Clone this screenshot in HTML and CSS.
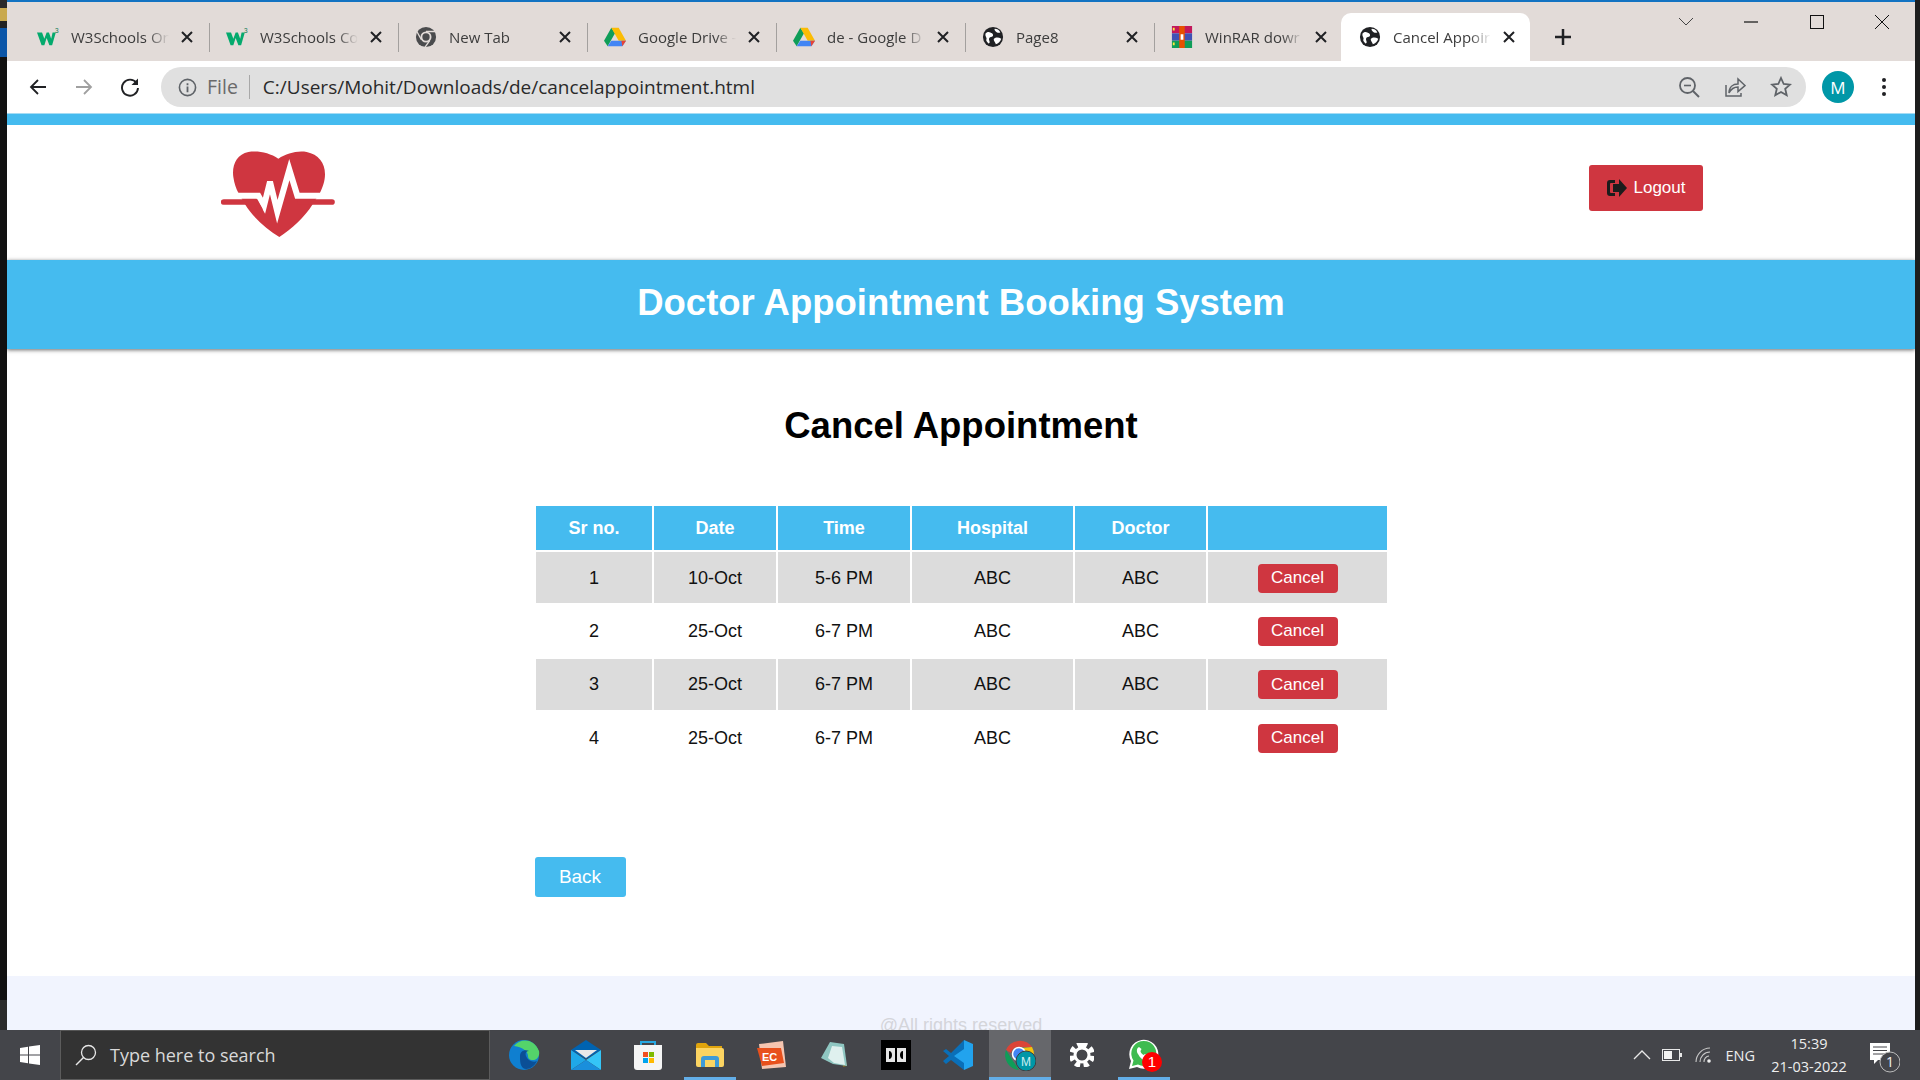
FILE: index.html
```html
<!DOCTYPE html>
<html lang="en">
<head>
    <meta charset="UTF-8">
    <title>Cancel Appointment</title>
    <link rel="stylesheet" href="styles.css">
</head>
<body>

<svg class="defs" width="0" height="0">
    <symbol id="w3" viewBox="0 0 24 20">
        <path fill="#04aa6d" d="M0 5h5.500l2.500 7 2.500-7h2.500l2.500 7 1.500-7h3.500l-4 14h-3L10.500 11 8 19H5z"/>
        <text x="19.500" y="5.500" font-size="7" fill="#0a7a50" font-family="Liberation Sans">3</text>
    </symbol>
    <symbol id="globe" viewBox="0 0 24 24">
        <circle cx="12" cy="12" r="11" fill="#202124"/>
        <path fill="#fff" d="M4 8c3-3 5-1 7 0 2 2 1 4-1 4s-3 2-2 4 0 3-1 3c-2-2-3-3-2-5 0-2-2-3-1-6zM13 14c2-2 5-2 8 0-1 3-3 5-6 6 0-2-3-4-2-6zM14 3c2 0 5 1 6 4-2 1-4 0-5-1s-2-2-1-3z"/>
    </symbol>
    <symbol id="drive" viewBox="0 0 24 22">
        <path fill="#0f9d58" d="M8 1 0 15l4 6 8-14z"/>
        <path fill="#fbbc04" d="M8 1h8l8 14h-8z"/>
        <path fill="#4285f4" d="M4 21h16l4-6H8z"/>
        <path fill="#ea4335" d="M20 21l4-6h-5z"/>
    </symbol>
    <symbol id="x" viewBox="0 0 14 14">
        <path d="M2 2l10 10M12 2 2 12" stroke="#202124" stroke-width="2"/>
    </symbol>
</svg>

<div class="desktop">
    <div class="window">
        <div class="edge edge-left"></div>

        <div class="browser">
            <div class="tabstrip">
                <div class="tab">
                    <svg class="favicon"><use href="#w3"/></svg>
                    <span class="tab-title">W3Schools On</span>
                    <svg class="tab-close"><use href="#x"/></svg>
                </div>
                <div class="tab">
                    <svg class="favicon"><use href="#w3"/></svg>
                    <span class="tab-title">W3Schools Co</span>
                    <svg class="tab-close"><use href="#x"/></svg>
                </div>
                <div class="tab">
                    <svg class="favicon" viewBox="0 0 24 24">
                        <circle cx="12" cy="12" r="11" fill="#4a4b4d"/>
                        <circle cx="12" cy="12" r="6" fill="#e2dbd8"/>
                        <circle cx="12" cy="12" r="4" fill="#4a4b4d"/>
                        <path d="M12 6h10M7 15 2 6M16 16l-5 7" stroke="#e2dbd8" stroke-width="1.5"/>
                    </svg>
                    <span class="tab-title">New Tab</span>
                    <svg class="tab-close"><use href="#x"/></svg>
                </div>
                <div class="tab">
                    <svg class="favicon"><use href="#drive"/></svg>
                    <span class="tab-title">Google Drive -</span>
                    <svg class="tab-close"><use href="#x"/></svg>
                </div>
                <div class="tab">
                    <svg class="favicon"><use href="#drive"/></svg>
                    <span class="tab-title">de - Google D</span>
                    <svg class="tab-close"><use href="#x"/></svg>
                </div>
                <div class="tab">
                    <svg class="favicon"><use href="#globe"/></svg>
                    <span class="tab-title">Page8</span>
                    <svg class="tab-close"><use href="#x"/></svg>
                </div>
                <div class="tab tab-last">
                    <svg class="favicon" viewBox="0 0 24 24">
                        <rect x="1" y="0" width="22" height="8" fill="#c2185b"/>
                        <rect x="1" y="8" width="22" height="8" fill="#3f51b5"/>
                        <rect x="1" y="16" width="22" height="8" fill="#0f9d58"/>
                        <rect x="9" y="0" width="6" height="24" fill="#e65100"/>
                        <rect x="10.500" y="9" width="3" height="6" fill="#fff"/>
                        <path d="M3 2v3M3 18v3" stroke="#ffeb3b" stroke-width="2"/>
                    </svg>
                    <span class="tab-title">WinRAR dowr</span>
                    <svg class="tab-close"><use href="#x"/></svg>
                </div>
                <div class="tab tab-active">
                    <svg class="favicon"><use href="#globe"/></svg>
                    <span class="tab-title">Cancel Appoir</span>
                    <svg class="tab-close"><use href="#x"/></svg>
                </div>
                <svg class="new-tab" viewBox="0 0 20 20"><path d="M10 2v16M2 10h16" stroke="#202124" stroke-width="2.500"/></svg>
                <div class="window-controls">
                    <div class="control"><svg width="16" height="16" viewBox="0 0 16 16"><path d="M1 4l7 7 7-7" fill="none" stroke="#444" stroke-width="1"/></svg></div>
                    <div class="control"><svg width="16" height="16" viewBox="0 0 16 16"><path d="M1 8h14" stroke="#111" stroke-width="1.200"/></svg></div>
                    <div class="control"><svg width="16" height="16" viewBox="0 0 16 16"><rect x="1.500" y="1.500" width="13" height="13" fill="none" stroke="#111" stroke-width="1"/></svg></div>
                    <div class="control"><svg width="16" height="16" viewBox="0 0 16 16"><path d="M1 1l14 14M15 1 1 15" stroke="#111" stroke-width="1"/></svg></div>
                </div>
            </div>

            <div class="toolbar">
                <svg class="nav-icon" viewBox="0 0 20 20"><path d="M18 10H3M10 3l-7 7 7 7" fill="none" stroke="#202124" stroke-width="1.800"/></svg>
                <svg class="nav-icon" viewBox="0 0 20 20"><path d="M2 10h15M10 3l7 7-7 7" fill="none" stroke="#a0a0a0" stroke-width="1.800"/></svg>
                <svg class="nav-icon" viewBox="0 0 20 20"><path d="M16.500 6A8 8 0 1 0 18 11" fill="none" stroke="#202124" stroke-width="1.900"/><path d="M18 1.500V8h-6.500z" fill="#202124"/></svg>
                <div class="omnibox">
                    <svg class="info-icon" viewBox="0 0 20 20"><circle cx="10" cy="10" r="8.500" fill="none" stroke="#5f6368" stroke-width="1.700"/><path d="M10 9v6M10 5.500v2" stroke="#5f6368" stroke-width="1.900"/></svg>
                    <span class="scheme">File</span>
                    <span class="url">C:/Users/Mohit/Downloads/de/cancelappointment.html</span>
                    <div class="omni-actions">
                        <svg class="omni-icon" viewBox="0 0 22 22"><circle cx="9.500" cy="9.500" r="7.500" fill="none" stroke="#5f6368" stroke-width="1.800"/><path d="M15 15l6 6" stroke="#5f6368" stroke-width="2"/><path d="M6 9.500h7" stroke="#5f6368" stroke-width="1.600"/></svg>
                        <svg class="omni-icon" viewBox="0 0 22 22"><path d="M2 9v11h15v-3" fill="none" stroke="#5f6368" stroke-width="1.500"/><path d="M5 17c0-6 4-9 9-9V3l7 6.500-7 6V11c-4 0-7 2-9 6z" fill="none" stroke="#5f6368" stroke-width="1.500"/></svg>
                        <svg class="omni-icon" viewBox="0 0 22 22"><path d="M11 2l2.700 6 6.300.6-4.800 4.200 1.500 6.500L11 16l-5.700 3.300 1.500-6.500L2 8.600 8.300 8z" fill="none" stroke="#5f6368" stroke-width="1.800"/></svg>
                    </div>
                </div>
                <div class="avatar">M</div>
                <svg class="dots" viewBox="0 0 6 22"><circle cx="3" cy="4" r="2" fill="#202124"/><circle cx="3" cy="11" r="2" fill="#202124"/><circle cx="3" cy="18" r="2" fill="#202124"/></svg>
            </div>

            <div class="page">
                <div class="top-strip"></div>
                <header class="site-header">
                    <svg class="logo" viewBox="93 62 342 258">
                        <path fill="#cf3640" d="M265 85C240 68 205 60 175 65 140 72 125 105 130 140c3 20 8 35 15 47l20 35c25 40 65 75 103 98 38-25 75-58 100-98l22-35c8-15 15-35 15-55 0-35-20-60-55-67-30-5-60 5-85 20z"/>
                        <path fill="none" stroke="#fff" stroke-width="18" d="M120 196h85l17 30 18-72 22 90 36-126 24 78h95"/>
                        <path fill="none" stroke="#cf3640" stroke-width="17" stroke-linecap="round" d="M101 215h96l12 22M330 215h96"/>
                    </svg>
                    <button class="logout-btn">
                        <svg class="logout-icon" viewBox="0 0 20 20">
                            <path fill="#1c1c1c" d="M8 2H3a3 3 0 0 0-3 3v10a3 3 0 0 0 3 3h5v-3H4a1 1 0 0 1-1-1V6a1 1 0 0 1 1-1h4z"/>
                            <path fill="#1c1c1c" d="M12 1l8 9-8 9v-5H6V6h6z"/>
                        </svg>
                        Logout
                    </button>
                </header>

                <div class="banner">Doctor Appointment Booking System</div>

                <main class="content">
                    <h2 class="page-title">Cancel Appointment</h2>
                    <table class="appt-table">
                        <thead>
                            <tr>
                                <th class="col-sr">Sr no.</th>
                                <th class="col-date">Date</th>
                                <th class="col-time">Time</th>
                                <th class="col-hospital">Hospital</th>
                                <th class="col-doctor">Doctor</th>
                                <th class="col-action"></th>
                            </tr>
                        </thead>
                        <tbody>
                            <tr>
                                <td>1</td><td>10-Oct</td><td>5-6 PM</td><td>ABC</td><td>ABC</td>
                                <td><button class="cancel-btn">Cancel</button></td>
                            </tr>
                            <tr>
                                <td>2</td><td>25-Oct</td><td>6-7 PM</td><td>ABC</td><td>ABC</td>
                                <td><button class="cancel-btn">Cancel</button></td>
                            </tr>
                            <tr>
                                <td>3</td><td>25-Oct</td><td>6-7 PM</td><td>ABC</td><td>ABC</td>
                                <td><button class="cancel-btn">Cancel</button></td>
                            </tr>
                            <tr>
                                <td>4</td><td>25-Oct</td><td>6-7 PM</td><td>ABC</td><td>ABC</td>
                                <td><button class="cancel-btn">Cancel</button></td>
                            </tr>
                        </tbody>
                    </table>
                    <div class="back-row">
                        <button class="back-btn">Back</button>
                    </div>
                </main>

                <footer class="site-footer">@All rights reserved</footer>
            </div>
        </div>

        <div class="edge edge-right"></div>
    </div>

    <!-- Windows taskbar -->
    <div class="taskbar">
        <div class="start">
            <svg width="20" height="20" viewBox="0 0 20 20"><path fill="#fff" d="M0 3l8-1.200V9.500H0zM9 1.600 20 0v9.500H9zM0 10.500h8v7.700L0 17zM9 10.500h11V20L9 18.400z"/></svg>
        </div>
        <div class="search">
            <svg width="22" height="22" viewBox="0 0 22 22"><circle cx="13.500" cy="8.500" r="7" fill="none" stroke="#e8e8e8" stroke-width="1.300"/><path d="M8.500 13.500 1 21" stroke="#e8e8e8" stroke-width="1.400"/></svg>
            <span class="search-text">Type here to search</span>
        </div>
        <div class="apps">
            <div class="app">
                <svg width="32" height="32" viewBox="0 0 32 32">
                    <circle cx="16" cy="16" r="15" fill="#0f7fd0"/>
                    <path fill="#54d36a" d="M6 7c6-8 20-8 25 5 1 5-2 9-6 9-4 0-5-2-5-4 0-5-6-9-14-10z"/>
                    <path fill="#0b4f96" d="M12 17c0-5 5-7 9-5-5 0-4 6 0 9 3 2 6 2 8 1-4 8-11 9-14 7-3-3-3-8-3-12z"/>
                </svg>
            </div>
            <div class="app">
                <svg width="30" height="30" viewBox="0 0 30 30">
                    <path fill="#0063b1" d="M0 10 15 0l15 10-15 9z"/>
                    <path fill="#e8e8e8" d="M4 10h22l-11 8z"/>
                    <path fill="#1fa8e8" d="M0 10l15 10L0 30z"/>
                    <path fill="#35c5f7" d="M30 10 15 20l15 10z"/>
                    <path fill="#1a8fdc" d="M0 30l15-10 15 10z"/>
                </svg>
            </div>
            <div class="app">
                <svg width="30" height="30" viewBox="0 0 30 30">
                    <path d="M8 6V2h14v4" fill="none" stroke="#27a7e0" stroke-width="2"/>
                    <path fill="#f5f5f5" d="M1 5h28v22a3 3 0 0 1-3 3H4a3 3 0 0 1-3-3z"/>
                    <rect x="10" y="12" width="5" height="5" fill="#f25022"/>
                    <rect x="16" y="12" width="5" height="5" fill="#7fba00"/>
                    <rect x="10" y="18" width="5" height="5" fill="#00a4ef"/>
                    <rect x="16" y="18" width="5" height="5" fill="#ffb900"/>
                </svg>
            </div>
            <div class="app app-open">
                <svg width="28" height="24" viewBox="0 0 28 24">
                    <path fill="#e0a40c" d="M0 2a2 2 0 0 1 2-2h8l3 3h13v6H0z"/>
                    <path fill="#fcd462" d="M0 5h26a2 2 0 0 1 2 2v15a2 2 0 0 1-2 2H2a2 2 0 0 1-2-2z"/>
                    <path fill="#3f9bd8" d="M5 24v-8a3 3 0 0 1 3-3h12a3 3 0 0 1 3 3v8h-4v-7H9v7z"/>
                </svg>
            </div>
            <div class="app">
                <svg width="30" height="28" viewBox="0 0 30 28">
                    <path fill="#f6c5b0" d="M2 3 26 0l3 26-24 2z"/>
                    <path fill="#e8501c" d="M0 7h24l3 15-22 3z"/>
                    <text x="5" y="20" font-size="11" font-weight="700" fill="#fff" font-family="Liberation Sans">EC</text>
                </svg>
            </div>
            <div class="app">
                <svg width="28" height="28" viewBox="0 0 28 28">
                    <path fill="#8a6a20" d="M22 2l5 23-4 1z"/>
                    <path fill="#8fc7c2" d="M10 1 24 3l3 22-14-2L1 17z"/>
                    <path fill="#dff0ee" d="M12 5l10 1 3 18-11-2-6-5z"/>
                </svg>
            </div>
            <div class="app">
                <svg width="30" height="30" viewBox="0 0 30 30">
                    <rect width="30" height="30" fill="#000"/>
                    <path d="M5 8h9v14H5zM25 8h-9v14h9z" fill="#e6e6e6"/>
                    <path d="M8 11c4 0 4 8 0 8zM22 11c-4 0-4 8 0 8z" fill="#000"/>
                </svg>
            </div>
            <div class="app">
                <svg width="30" height="30" viewBox="0 0 30 30">
                    <path fill="#0a6fb8" d="M21 0 8 13 3 9 0 11l6 5-6 5 3 3 5-4 13 10z"/>
                    <path fill="#22a3ee" d="M21 0l9 4v22l-9 4V9L11 16l10 7z"/>
                </svg>
            </div>
            <div class="app app-active">
                <svg width="32" height="32" viewBox="0 0 32 32">
                    <path fill="#db4437" d="M2 11a15 15 0 0 1 26-3H15C10 8 8 11 7 14z"/>
                    <path fill="#f4c20d" d="M28 8a15 15 0 0 1 2 8h-8a7 7 0 0 0-5-7z"/>
                    <path fill="#0f9d58" d="M2 11l7 11 6 9A15 15 0 0 1 2 11z"/>
                    <circle cx="15" cy="15" r="6.500" fill="#4285f4" stroke="#fff" stroke-width="1.500"/>
                    <circle cx="22" cy="22" r="10" fill="#0097a7" stroke="#3b4043"/>
                    <text x="22" y="26.500" font-size="12" text-anchor="middle" fill="#cfeff2" font-family="Liberation Sans">M</text>
                </svg>
            </div>
            <div class="app">
                <svg width="24" height="24" viewBox="0 0 24 24">
                    <path fill="none" stroke="#fff" stroke-width="7" stroke-dasharray="4.600 3.250" d="M12 2.500a9.500 9.500 0 1 1 0 19 9.500 9.500 0 1 1 0-19z"/>
                    <circle cx="12" cy="12" r="7" fill="none" stroke="#fff" stroke-width="3"/>
                </svg>
            </div>
            <div class="app app-open">
                <svg width="32" height="32" viewBox="0 0 32 32">
                    <path fill="#fff" d="M1 30l2-8A14.500 14.500 0 1 1 9 28z"/>
                    <path fill="#3fbb50" d="M4 27l1.500-5.500A12.500 12.500 0 1 1 10 25.500z"/>
                    <path fill="#fff" d="M11 8c-2 1-3 4-1 7 2 4 5 6 8 7l2-5-3-2-1.500 1c-2-1-3-3-3-4l1-2z"/>
                </svg>
                <span class="badge">1</span>
            </div>
        </div>
        <div class="tray">
            <svg class="tray-chevron" width="18" height="10" viewBox="0 0 18 10"><path d="M1 9l8-8 8 8" fill="none" stroke="#e8e8e8" stroke-width="1.300"/></svg>
            <svg class="tray-battery" width="20" height="12" viewBox="0 0 20 12"><rect x=".5" y=".5" width="17" height="11" fill="none" stroke="#e8e8e8"/><rect x="2" y="2" width="8" height="8" fill="#f2f2f2"/><rect x="18" y="4" width="2" height="4" fill="#e8e8e8"/></svg>
            <svg class="tray-wifi" width="18" height="16" viewBox="0 0 18 16"><path d="M1 15c0-7 6-14 14-14M5 15c0-5 4-10 10-10M9 15c0-3 2-6 5-6" fill="none" stroke="#c9c9c9" stroke-width="1.100"/><circle cx="14" cy="14" r="1.800" fill="#eee"/></svg>
            <span class="tray-lang">ENG</span>
            <div class="clock">
                <span>15:39</span>
                <span>21-03-2022</span>
            </div>
            <div class="notify">
                <svg width="30" height="30" viewBox="0 0 30 30">
                    <path fill="#fff" d="M0 0h20v17H8l-4 4v-4H0z"/>
                    <path d="M3 4h14M3 7.500h14M3 11h14" stroke="#44454a" stroke-width="1"/>
                    <circle cx="20" cy="19" r="10" fill="#44454a" stroke="#bbb" stroke-width="1"/>
                    <text x="20" y="24" font-size="14" text-anchor="middle" fill="#f2f2f2" font-family="Open Sans">1</text>
                </svg>
            </div>
        </div>
    </div>
</div>

</body>
</html>
```

FILE: styles.css
```css
* {
    box-sizing: border-box;
}

body {
    margin: 0;
    font-family: "Liberation Sans", Arial, sans-serif;
    overflow: hidden;
}

.defs {
    position: absolute;
}

.desktop {
    display: flex;
    flex-direction: column;
    width: 1920px;
    height: 1080px;
    overflow: hidden;
}

.window {
    display: flex;
    flex: 1;
    min-height: 0;
}

.edge-left {
    width: 7px;
    background: linear-gradient(#2a2a2a 0, #2a2a2a 8px, #c9a94e 8px, #c9a94e 21px, #222 21px, #222 28px, #0b56a8 28px, #0b56a8 57px, #111 57px, #111 1000px, #2b2b2b 1000px);
}

.edge-right {
    width: 5px;
    background: #1d1d1d;
}

.browser {
    display: flex;
    flex: 1;
    flex-direction: column;
    min-width: 0;
}

/* Tab strip */
.tabstrip {
    display: flex;
    align-items: flex-end;
    height: 61px;
    padding-left: 14px;
    background: #e2dbd8;
    border-top: 2px solid #1273c2;
    flex-shrink: 0;
}

.tab {
    position: relative;
    display: flex;
    align-items: center;
    width: 189px;
    height: 48px;
    padding-left: 16px;
    flex-shrink: 0;
}

.tab::after {
    content: "";
    position: absolute;
    right: 0;
    top: 10px;
    width: 1px;
    height: 29px;
    background: #a3a09e;
}

.tab-last {
    width: 186px;
}

.tab-last::after,
.tab-active::after {
    display: none;
}

.tab-active {
    padding-left: 18px;
    background: #fff;
    border-radius: 10px 10px 0 0;
}

.tab-active::before {
    content: "";
    position: absolute;
    left: -10px;
    right: -10px;
    bottom: 0;
    height: 10px;
    z-index: -1;
    background:
        radial-gradient(circle at 0 0, #e2dbd8 10px, #fff 10.500px) left / 10px 10px no-repeat,
        radial-gradient(circle at 100% 0, #e2dbd8 10px, #fff 10.500px) right / 10px 10px no-repeat;
}

.favicon {
    width: 22px;
    height: 22px;
    margin-right: 12px;
    flex-shrink: 0;
}

.tab-title {
    width: 101px;
    overflow: hidden;
    white-space: nowrap;
    font-family: "Open Sans", sans-serif;
    font-size: 15px;
    color: #3c3c3c;
    -webkit-mask-image: linear-gradient(90deg, #000 76%, transparent 97%);
    mask-image: linear-gradient(90deg, #000 76%, transparent 97%);
}

.tab-close {
    width: 14px;
    height: 14px;
    margin-left: 8px;
    flex-shrink: 0;
}

.new-tab {
    width: 20px;
    height: 20px;
    margin: 0 0 14px 23px;
    flex-shrink: 0;
}

.window-controls {
    display: flex;
    align-self: flex-start;
    margin-left: auto;
}

.control {
    display: flex;
    align-items: center;
    justify-content: center;
    width: 65.500px;
    height: 40px;
}

/* Address bar row */
.toolbar {
    display: flex;
    align-items: center;
    height: 52px;
    padding-left: 21px;
    background: #fff;
    flex-shrink: 0;
}

.nav-icon {
    width: 20px;
    height: 20px;
    margin-right: 26px;
    flex-shrink: 0;
}

.omnibox {
    display: flex;
    align-items: center;
    width: 1645px;
    height: 40px;
    margin-left: -5px;
    padding-left: 17px;
    background: #e0e0e0;
    border-radius: 20px;
}

.info-icon {
    width: 19px;
    height: 19px;
    margin-right: 10px;
    flex-shrink: 0;
}

.scheme {
    padding-right: 11px;
    border-right: 1px solid #a8a8a8;
    font-family: "Open Sans", sans-serif;
    font-size: 19.500px;
    line-height: 24px;
    color: #6a6a6a;
}

.url {
    margin-left: 13px;
    font-family: "Open Sans", sans-serif;
    font-size: 19px;
    color: #2a2a2a;
}

.omni-actions {
    display: flex;
    gap: 24px;
    margin-left: auto;
    padding-right: 14px;
}

.omni-icon {
    width: 22px;
    height: 22px;
}

.avatar {
    display: flex;
    align-items: center;
    justify-content: center;
    width: 32px;
    height: 32px;
    margin-left: 16px;
    border-radius: 50%;
    background: #0097a7;
    color: #fff;
    font-family: "Open Sans", sans-serif;
    font-size: 17px;
}

.dots {
    width: 6px;
    height: 22px;
    margin-left: 27px;
}

/* Web page */
.page {
    flex: 1;
    min-height: 0;
    overflow: hidden;
    background: #fff;
}

.top-strip {
    height: 12px;
    background: #45bbef;
    border-top: 1px solid #a5dcf4;
}

.site-header {
    display: flex;
    align-items: flex-start;
    justify-content: space-between;
    height: 135px;
    padding: 26px 212px 0 214px;
}

.logo {
    width: 114px;
    height: 86px;
}

.logout-btn {
    display: flex;
    align-items: center;
    justify-content: center;
    gap: 7px;
    width: 114px;
    height: 46px;
    margin-top: 14px;
    padding: 0;
    border: none;
    border-radius: 3px;
    background: #cf3640;
    color: #fff;
    font-family: "Liberation Sans", Arial, sans-serif;
    font-size: 17px;
}

.logout-icon {
    width: 20px;
    height: 20px;
}

.banner {
    position: relative;
    height: 89px;
    padding-top: 20px;
    background: #45bbef;
    box-shadow: 0 1px 4px rgba(0, 0, 0, 0.6);
    color: #fff;
    font-size: 36.500px;
    font-weight: 700;
    line-height: 46px;
    text-align: center;
}

.content {
    display: flex;
    flex-direction: column;
    align-items: center;
    height: 627px;
}

.page-title {
    margin: 54px 0 0;
    font-size: 36.500px;
    font-weight: 700;
    line-height: 46px;
    color: #000;
}

.appt-table {
    width: 855px;
    margin: 55px 0 0 1px;
    border-spacing: 2px;
    table-layout: fixed;
    font-size: 18px;
    text-align: center;
    color: #111;
}

.appt-table th {
    height: 44px;
    padding: 0;
    background: #45bbef;
    color: #fff;
    font-weight: 700;
}

.appt-table td {
    height: 51.300px;
    padding: 1px 0 0;
}

.appt-table tbody tr:nth-child(odd) td {
    background: #dcdcdc;
}

.col-sr { width: 116px; }
.col-date { width: 122px; }
.col-time { width: 132px; }
.col-hospital { width: 161px; }
.col-doctor { width: 131px; }
.col-action { width: 179px; }

.cancel-btn {
    display: inline-block;
    width: 80px;
    height: 29px;
    padding: 0;
    border: none;
    border-radius: 4px;
    background: #cf3640;
    color: #fff;
    font-family: "Liberation Sans", Arial, sans-serif;
    font-size: 17px;
    vertical-align: middle;
}

.back-row {
    width: 853px;
    margin-top: 92px;
}

.back-btn {
    width: 91px;
    height: 40px;
    padding: 0;
    border: none;
    border-radius: 3px;
    background: #45bbef;
    color: #fff;
    font-family: "Liberation Sans", Arial, sans-serif;
    font-size: 19px;
}

.site-footer {
    height: 120px;
    padding-top: 38px;
    background: #f1f4fe;
    color: #d4d5da;
    font-size: 18px;
    line-height: 22px;
    text-align: center;
}

/* Taskbar */
.taskbar {
    display: flex;
    align-items: stretch;
    height: 50px;
    background: #44454a;
    flex-shrink: 0;
}

.start {
    display: flex;
    align-items: center;
    justify-content: center;
    width: 60px;
}

.search {
    display: flex;
    align-items: center;
    width: 430px;
    padding-left: 14px;
    background: #333;
    border: 1px solid #5c5c5c;
    border-top-color: #555;
}

.search-text {
    margin-left: 13px;
    font-family: "Open Sans", sans-serif;
    font-size: 18px;
    color: #d9d9d9;
}

.apps {
    display: flex;
    margin-left: 3px;
}

.app {
    position: relative;
    display: flex;
    align-items: center;
    justify-content: center;
    width: 62px;
}

.app-open::after,
.app-active::after {
    content: "";
    position: absolute;
    left: 5px;
    right: 5px;
    bottom: 0;
    height: 3px;
    background: #63aee8;
}

.app-active {
    background: #66676b;
}

.app-active::after {
    left: 0;
    right: 0;
}

.badge {
    position: absolute;
    right: 13px;
    bottom: 8px;
    width: 20px;
    height: 20px;
    border-radius: 50%;
    background: #f00;
    color: #fff;
    font-size: 15px;
    line-height: 20px;
    text-align: center;
}

.tray {
    display: flex;
    align-items: center;
    margin-left: auto;
    padding-right: 20px;
    color: #eee;
    font-family: "Open Sans", sans-serif;
}

.tray-chevron {
    margin-right: 11px;
}

.tray-battery {
    margin-right: 13px;
}

.tray-wifi {
    margin-right: 12px;
}

.tray-lang {
    margin-right: 16px;
    font-size: 14.500px;
}

.clock {
    display: flex;
    flex-direction: column;
    align-items: center;
    width: 76px;
    margin-right: 23px;
    font-size: 14.500px;
    line-height: 23px;
}

.notify {
    display: flex;
    width: 30px;
    height: 30px;
    margin-top: 6px;
}
```
